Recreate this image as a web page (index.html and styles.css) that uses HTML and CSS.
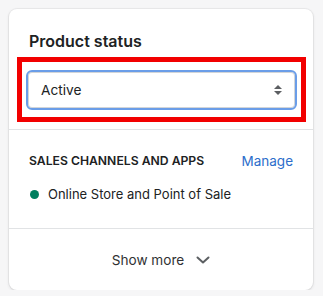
FILE: index.html
```html
<!DOCTYPE html>
<html>
<head>
    <title>Product status</title>
    <link rel="stylesheet" href="styles.css">
</head>
<body>
    <div class="card">
        <div class="section top">
            <h2 class="title">Product status</h2>
            <div class="highlight">
                <div class="select">
                    <span>Active</span>
                    <svg class="arrows" width="10" height="12" viewBox="0 0 10 12">
                        <path d="M5 1 L9 5 H1 Z" fill="#5c5f62"/>
                        <path d="M5 11 L9 7 H1 Z" fill="#5c5f62"/>
                    </svg>
                </div>
            </div>
        </div>
        <div class="section channels">
            <div class="row head">
                <span class="subtitle">SALES CHANNELS AND APPS</span>
                <a class="link" href="#">Manage</a>
            </div>
            <div class="row item">
                <span class="dot"></span>
                <span>Online Store and Point of Sale</span>
            </div>
        </div>
        <div class="footer">
            <span>Show more</span>
            <svg width="14" height="8" viewBox="0 0 14 8">
                <path d="M1.5 1.5 L7 6.5 L12.5 1.5" fill="none" stroke="#5c5f62" stroke-width="2" stroke-linecap="round" stroke-linejoin="round"/>
            </svg>
        </div>
    </div>
</body>
</html>
```

FILE: styles.css
```css
body {
    margin: 0;
    padding: 9px 10px 0 9px;
    background: #f6f6f7;
    font-family: Inter, "Noto Sans", sans-serif;
    color: #202223;
    font-size: 13px;
}
.card {
    background: #fff;
    border-radius: 8px;
    box-shadow: 0 0 0 1px rgba(63, 63, 68, 0.06), 0 1px 3px rgba(63, 63, 68, 0.15);
    width: 304px;
    height: 281px;
    display: flex;
    flex-direction: column;
}
.section {
    padding: 20px 20px;
}
.top {
    padding-bottom: 7px;
    border-bottom: 1px solid #e1e3e5;
}
.title {
    margin: 0 0 4px;
    font-size: 16px;
    font-weight: 600;
    line-height: 24px;
}
.highlight {
    margin: 0 -13px 0 -12px;
    border: 5px solid #f20000;
    padding: 8px 4px 7px 4px;
}
.select {
    height: 36px;
    border: 2px solid #6a9de8;
    border-radius: 6px;
    box-shadow: inset 0 0 0 1px #d2d5d8;
    display: flex;
    align-items: center;
    justify-content: space-between;
    padding: 0 12px 0 13px;
    font-size: 13.7px;
}
.channels {
    padding-bottom: 24px;
    border-bottom: 1px solid #e1e3e5;
}
.row {
    display: flex;
    align-items: center;
    line-height: 20px;
}
.head {
    justify-content: space-between;
    margin-bottom: 13px;
    padding-top: 1px;
}
.subtitle {
    font-size: 12.2px;
    font-weight: 600;
}
.link {
    color: #2c6ecb;
    text-decoration: none;
    font-size: 13.5px;
}
.dot {
    width: 9px;
    height: 9px;
    border-radius: 50%;
    background: #007f5f;
    margin: 0 9px 0 1px;
}
.footer {
    flex: 1;
    display: flex;
    align-items: center;
    justify-content: center;
    gap: 12px;
    font-size: 13.6px;
    color: #303133;
}
```
